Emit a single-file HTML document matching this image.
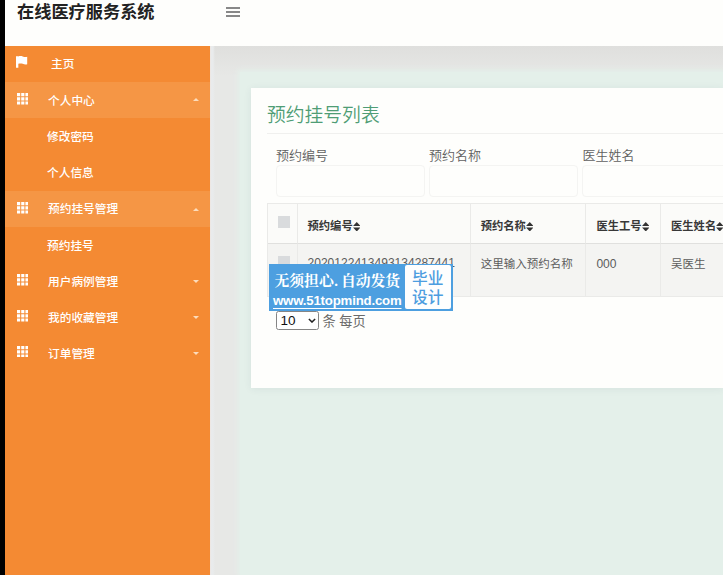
<!DOCTYPE html>
<html lang="zh-CN">
<head>
<meta charset="utf-8">
<title>在线医疗服务系统</title>
<style>
*{box-sizing:border-box;margin:0;padding:0}
html,body{width:723px;height:575px;overflow:hidden;background:#e8eae8}
body{position:relative;font-family:"Liberation Sans","Noto Sans CJK SC",sans-serif;color:#555;font-size:13px}
.abs{position:absolute}
#strip{left:0;top:0;width:5px;height:575px;background:#000}
#header{left:5px;top:0;width:718px;height:46px;background:#fefefc}
#title{left:17px;top:0px;font-size:17.2px;font-weight:700;color:#222;line-height:24px;white-space:nowrap}
#burger{left:226px;top:7px;width:14px;height:10px}
#burger i{display:block;height:2px;background:#888;margin-bottom:2px}
#side{left:5px;top:46px;width:205px;height:529px;background:#f48a33}
.mi{position:absolute;left:0;width:205px;height:36px;color:#fff;font-size:11.7px;font-weight:500;line-height:36px;white-space:nowrap}
.mi.hl{background:#f59645}
.mi span{position:absolute;left:43px;top:0}
.mi.sub span{left:42px}
.grid{position:absolute;left:11.7px;top:11px;width:11.6px;height:11.6px}
.caret{position:absolute;left:187.5px;top:15.5px;width:0;height:0;border-left:3px solid transparent;border-right:3px solid transparent}
.caret.up{border-bottom:3.5px solid #fcdcbc;top:16.5px}
.caret.dn{border-top:3.5px solid #fcdcbc}
#main{left:210px;top:46px;width:513px;height:529px;background:linear-gradient(#dfdfdd,#e7e8e6 30px)}
#edge{left:210px;top:46px;width:5px;height:529px;background:linear-gradient(90deg,#efe6e0,#e9ebec 1.5px,#e9ebec 3px,rgba(233,235,236,0))}
#panel{left:239.5px;top:71.5px;width:485px;height:504px;background:#e4f0ea;box-shadow:0 0 5px 2px #e4f0ea}
#card{left:251px;top:88px;width:472px;height:300px;background:#fefefc;box-shadow:0 1px 8px rgba(40,60,80,.07)}
#ctitle{left:267px;top:102px;font-size:18.8px;line-height:28px;color:#4f9d75;white-space:nowrap;font-weight:350}
#hr{left:267px;top:133px;width:456px;height:1px;background:#f0f0ee}
.lbl{position:absolute;top:146px;font-size:13px;line-height:20px;color:#606060;font-weight:350;white-space:nowrap}
.inp{position:absolute;top:165px;height:32px;width:149px;border:1px solid #f4f4f2;border-radius:4px;background:#fefefc}
#tbl{left:267px;top:203px;width:470px;height:94px;border:1px solid #eaeae8}
.th{position:absolute;top:204px;height:40px;background:#fbfbf9;border-right:1px solid #eaeae8;border-bottom:1px solid #e0e0de;font-weight:700;font-size:11.3px;line-height:44px;color:#383838;white-space:nowrap}
.th svg{width:7.5px;height:9.5px;vertical-align:-1px;margin-left:0}
.td{position:absolute;top:244px;height:52px;background:#f4f4f2;border-right:1px solid #eaeae8;font-size:11.5px;line-height:40px;color:#5c5c5c;white-space:nowrap}
.td .n{font-size:12.05px}
.cb{position:absolute;width:12px;height:12px;background:#d9dbdd}
#wm{left:269px;top:264px;width:184px;height:47px;background:#4d9fe0}
#wm1{left:274.5px;top:270.5px;font-family:"Liberation Serif","Noto Serif CJK SC",serif;font-weight:700;font-size:14.8px;line-height:20px;color:#fff;white-space:nowrap}
#wm2{left:273px;top:292px;font-size:13.2px;letter-spacing:-0.17px;line-height:18px;color:#fff;text-decoration:underline;text-underline-offset:2.5px;text-decoration-thickness:1.2px;white-space:nowrap;font-weight:700}
#wm3{left:404.5px;top:265px;width:46.5px;height:44px;background:#fefefe;border-radius:2px;color:#4d9de0;font-size:15.7px;font-weight:500;line-height:19px;text-align:center;padding-top:4px}
#sel{left:276px;top:311px;width:42.5px;height:18.5px;border:1px solid #858585;border-radius:2.5px;background:#fff;color:#111;font-size:13.5px;line-height:17px;padding-left:3.6px}
#sel svg{position:absolute;left:30.5px;top:6px;width:8px;height:5.4px}
#per{left:322.5px;top:311.6px;font-size:13.2px;line-height:19px;color:#6a6a6a;white-space:nowrap}
</style>
</head>
<body>
<div class="abs" id="strip"></div>
<div class="abs" id="main"></div>
<div class="abs" id="edge"></div>
<div class="abs" id="panel"></div>
<div class="abs" id="card"></div>
<div class="abs" id="header"></div>
<div class="abs" id="title">在线医疗服务系统</div>
<div class="abs" id="burger"><i></i><i></i><i></i></div>
<div class="abs" id="side">
  <div class="mi" style="top:0"><svg class="grid" viewBox="0 0 12 12" style="width:11.7px;height:12px;left:11.4px;top:10.4px"><path d="M0 0h2.400v11.800h-2.400zM2.400 0.300c1.500-.5 3-.5 4.500 0s3 .8 4.600 .3v7.600c-1.600 .5-3.100 .2-4.600-.3s-3-.5-4.500 0z" fill="#fff"/></svg><span style="left:46px">主页</span></div>
  <div class="mi hl" style="top:35.5px;height:36px;line-height:37px"><svg class="grid" viewBox="0 0 11 11" style="top:11.5px"><path d="M0 0h3v3h-3zM4 0h3v3h-3zM8 0h3v3h-3zM0 4h3v3h-3zM4 4h3v3h-3zM8 4h3v3h-3zM0 8h3v3h-3zM4 8h3v3h-3zM8 8h3v3h-3z" fill="#fff"/></svg><span>个人中心</span><b class="caret up"></b></div>
  <div class="mi sub" style="top:72.5px"><span>修改密码</span></div>
  <div class="mi sub" style="top:109px"><span>个人信息</span></div>
  <div class="mi hl" style="top:145px;height:35.5px;line-height:36px"><svg class="grid" viewBox="0 0 11 11"><path d="M0 0h3v3h-3zM4 0h3v3h-3zM8 0h3v3h-3zM0 4h3v3h-3zM4 4h3v3h-3zM8 4h3v3h-3zM0 8h3v3h-3zM4 8h3v3h-3zM8 8h3v3h-3z" fill="#fff"/></svg><span>预约挂号管理</span><b class="caret up"></b></div>
  <div class="mi sub" style="top:182px"><span>预约挂号</span></div>
  <div class="mi" style="top:218px"><svg class="grid" viewBox="0 0 11 11" style="top:10px"><path d="M0 0h3v3h-3zM4 0h3v3h-3zM8 0h3v3h-3zM0 4h3v3h-3zM4 4h3v3h-3zM8 4h3v3h-3zM0 8h3v3h-3zM4 8h3v3h-3zM8 8h3v3h-3z" fill="#fff"/></svg><span>用户病例管理</span><b class="caret dn"></b></div>
  <div class="mi" style="top:254px"><svg class="grid" viewBox="0 0 11 11" style="top:10px"><path d="M0 0h3v3h-3zM4 0h3v3h-3zM8 0h3v3h-3zM0 4h3v3h-3zM4 4h3v3h-3zM8 4h3v3h-3zM0 8h3v3h-3zM4 8h3v3h-3zM8 8h3v3h-3z" fill="#fff"/></svg><span>我的收藏管理</span><b class="caret dn"></b></div>
  <div class="mi" style="top:290px"><svg class="grid" viewBox="0 0 11 11" style="top:9.6px"><path d="M0 0h3v3h-3zM4 0h3v3h-3zM8 0h3v3h-3zM0 4h3v3h-3zM4 4h3v3h-3zM8 4h3v3h-3zM0 8h3v3h-3zM4 8h3v3h-3zM8 8h3v3h-3z" fill="#fff"/></svg><span>订单管理</span><b class="caret dn"></b></div>
</div>
<div class="abs" id="ctitle">预约挂号列表</div>
<div class="abs" id="hr"></div>
<div class="lbl" style="left:276px">预约编号</div>
<div class="lbl" style="left:429px">预约名称</div>
<div class="lbl" style="left:582.5px">医生姓名</div>
<div class="inp" style="left:276px"></div>
<div class="inp" style="left:429px"></div>
<div class="inp" style="left:582px"></div>
<div class="abs" id="tbl"></div>
<div class="th" style="left:268px;width:30px"></div>
<div class="th" style="left:298px;width:173px;padding-left:9.500px">预约编号<svg viewBox="0 0 7 9"><path d="M0 3.800L3.500 0 7 3.800zM0 5.200L3.500 9 7 5.200z" fill="#333"/></svg></div>
<div class="th" style="left:471px;width:115px;padding-left:9.700px">预约名称<svg viewBox="0 0 7 9"><path d="M0 3.800L3.500 0 7 3.800zM0 5.200L3.500 9 7 5.200z" fill="#333"/></svg></div>
<div class="th" style="left:586px;width:75px;padding-left:10.400px">医生工号<svg viewBox="0 0 7 9"><path d="M0 3.800L3.500 0 7 3.800zM0 5.200L3.500 9 7 5.200z" fill="#333"/></svg></div>
<div class="th" style="left:661px;width:75px;padding-left:10px">医生姓名<svg viewBox="0 0 7 9"><path d="M0 3.800L3.500 0 7 3.800zM0 5.200L3.500 9 7 5.200z" fill="#333"/></svg></div>
<div class="td" style="left:268px;width:30px"></div>
<div class="td" style="left:298px;width:173px;padding-left:9.500px"><span class="n" style="position:relative;top:-1px">2020122413493134287441</span></div>
<div class="td" style="left:471px;width:115px;padding-left:9.700px">这里输入预约名称</div>
<div class="td" style="left:586px;width:75px;padding-left:10.400px"><span class="n">000</span></div>
<div class="td" style="left:661px;width:75px;padding-left:10px">吴医生</div>
<div class="cb" style="left:278px;top:216px"></div>
<div class="cb" style="left:278px;top:256px"></div>
<div class="abs" id="wm"></div>
<div class="abs" id="wm1">无须担心<span style="margin:0 2.900px 0 0.600px">.</span>自动发货</div>
<div class="abs" id="wm2">www.51topmind.com</div>
<div class="abs" id="wm3">毕业<br>设计</div>
<div class="abs" id="sel">10<svg viewBox="0 0 9 6"><path d="M1 1L4.500 4.500 8 1" fill="none" stroke="#222" stroke-width="1.700"/></svg></div>
<div class="abs" id="per">条 每页</div>
</body>
</html>
